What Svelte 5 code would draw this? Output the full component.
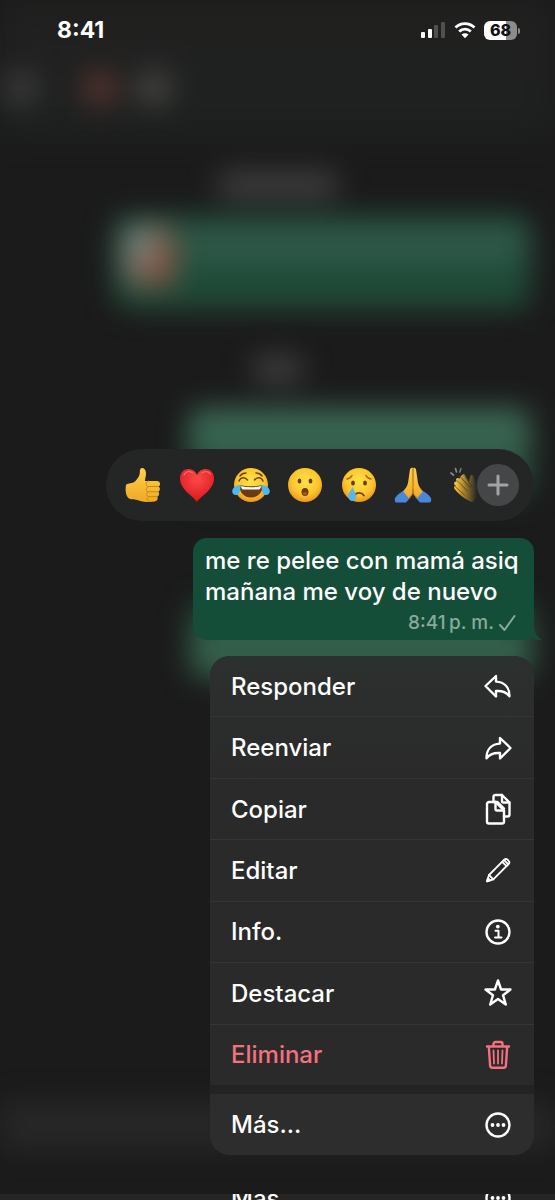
<script>
  let selected = $state('');

  const reactions = [
    { id: 'thumb', label: 'Pulgar arriba' },
    { id: 'heart', label: 'Corazón' },
    { id: 'joy', label: 'Risa' },
    { id: 'wow', label: 'Asombro' },
    { id: 'sad', label: 'Tristeza' },
    { id: 'pray', label: 'Gracias' },
    { id: 'clap', label: 'Aplausos' },
  ];

  const actions = [
    { id: 'reply', label: 'Responder' },
    { id: 'forward', label: 'Reenviar' },
    { id: 'copy', label: 'Copiar' },
    { id: 'edit', label: 'Editar' },
    { id: 'info', label: 'Info.' },
    { id: 'star', label: 'Destacar' },
    { id: 'trash', label: 'Eliminar', danger: true },
  ];
</script>

{#snippet icon(id)}
  <svg class="icon" viewBox="0 0 30 30" aria-hidden="true">
    {#if id === 'reply'}
      <path d="M13 5 2.500 15 13 25.500v-5.500c5.500-.4 10.300.8 13.500 5.200C26.500 16.500 21.500 11 13 10.600Z" />
    {:else if id === 'forward'}
      <path d="M17 5 27.500 15 17 25.500v-5.500c-5.500-.4-10.300.8-13.500 5.200C3.500 16.500 8.500 11 17 10.600Z" />
    {:else if id === 'copy'}
      <path d="M12.500 8H6a2 2 0 0 0-2 2v17.500a2 2 0 0 0 2 2h13a2 2 0 0 0 2-2V16.500Z" />
      <path d="M12.500 8v7a1.500 1.500 0 0 0 1.500 1.500h7" />
      <path d="M10.500 8V3a2 2 0 0 1 2-2H19l7.500 7.500v12a2 2 0 0 1-2 2H21" />
      <path d="M19 1v6a1.500 1.500 0 0 0 1.500 1.500h6M12.500 8h2l6.500 6.500" />
    {:else if id === 'edit'}
      <g stroke-width="1.800">
        <path d="M4 26.300 6 20 21.300 4.700a2.300 2.300 0 0 1 3.200 0l1.100 1.100a2.300 2.300 0 0 1 0 3.200L10.300 24.300Z" />
        <path d="m19.200 6.800 4.300 4.300M21 5l4.300 4.300M6 20l4.300 4.300" />
        <path d="m4 26.300 1-3.200 2.200 2.200Z" fill="currentColor" />
      </g>
    {:else if id === 'info'}
      <circle cx="15" cy="15" r="11.500" />
      <circle cx="14.800" cy="9.600" r="1.900" fill="currentColor" stroke="none" />
      <path d="M12.500 13.800h3V20M12 20.500h6.500" stroke-width="2" />
    {:else if id === 'star'}
      <path d="m15 2.500 3.100 9h9.400L20 17.200l2.800 9.300L15 21l-7.800 5.500L10 17.200 2.500 11.500h9.400Z" />
    {:else if id === 'trash'}
      <path d="M4 6.500h22M10.500 6.500V4a2 2 0 0 1 2-2h5a2 2 0 0 1 2 2v2.500M5.800 6.500l1.300 19a2.300 2.300 0 0 0 2.300 2.200h11.200a2.300 2.300 0 0 0 2.300-2.200l1.300-19" />
      <path d="m10.500 10.500.5 13M15 10.500v13M19.500 10.500l-.5 13" stroke-width="1.800" />
    {:else}
      <circle cx="15" cy="15" r="11.500" />
      <g fill="currentColor" stroke="none">
        <circle cx="9.500" cy="15" r="1.900" />
        <circle cx="15" cy="15" r="1.900" />
        <circle cx="20.500" cy="15" r="1.900" />
      </g>
    {/if}
  </svg>
{/snippet}

{#snippet emoji(id)}
  <svg class="emoji" viewBox="0 0 36 36" aria-hidden="true">
    {#if id === 'thumb'}
      <path d="M1 18c1-1.800 5-1.600 7.500-2.600 3-1.800 6-5.800 6.300-9.400.1-2.500.1-5 2.200-5.100 2.600 0 4 2.600 4 5.600 0 2.800-1 5-1 7.500h12c3.500 0 4 4.800 1.500 5.500 2 1.200 1.800 4.500-.3 5.200 1.600 1.400 1 4.300-1 4.900 1.200 1.800.2 4.400-2.200 4.900-5 .8-11.500.6-15.500-.8-3-1-4.500-1.500-8-1.500-6 .2-6.500-10-5.500-14.200Z" fill="url(#skin)" />
      <path d="M33.500 19.500h-10c-3 0-3.500-4 0-5.500M33 24.700h-9.500c-3 0-3.200-4.500 0-5.200M32 29.600h-8c-3 0-3-4.300-.5-4.900M24 34c-3-.4-2.500-4 0-4.400" fill="none" stroke="#c98a14" stroke-width="1" stroke-linecap="round" />
    {:else if id === 'heart'}
      <path d="M18 35C14 29 1 22.500 1 11.500 1 6 4.500 2 9.300 2c3.900 0 7.200 2.300 8.700 6 1.500-3.700 4.800-6 8.700-6C31.500 2 35 6 35 11.500 35 22.500 22 29 18 35Z" fill="url(#red)" />
      <path d="M5 8c1.500-3.500 5.500-4.500 8.500-2M23 6c3-2 6.500-1.500 8.300 1" fill="none" stroke="#ff9a94" stroke-width="1.500" stroke-linecap="round" opacity=".5" />
    {:else if id === 'pray'}
      <path d="M0 31c3-4 6-6 10-8l6 7-5 5.500H1c-1 0-1.500-2.500-1-4.500ZM36 31c-3-4-6-6-10-8l-6 7 5 5.500h10c1 0 1.500-2.500 1-4.500Z" fill="#4b87d9" />
      <path d="M17.800 1c-1.600-.8-2.700.3-3 2.500L13 16c-.8 4-3 5.500-4.800 8.500l5.500 6.500c3.300-1.500 4.300-4.500 4.300-8.500ZM18.200 1c1.600-.8 2.700.3 3 2.500L23 16c.8 4 3 5.500 4.800 8.500L22.300 31c-3.300-1.500-4.300-4.500-4.300-8.500Z" fill="url(#skin)" />
      <path d="M18 2v20c0 4-1 7-4 8.500M18 22c0 4 1 7 4 8.500" fill="none" stroke="#b97812" stroke-width="1" />
    {:else if id === 'clap'}
      <path d="m2 6 2.500 2M6.500 1.500l1 3.500M12 1.500l-1.200 3.500" stroke="#85898d" stroke-width="1.700" stroke-linecap="round" />
      <path d="M12 9c2-2.500 3.500-2 4.200-.5L20 15l1-5c.5-2.500 3-2.500 3.500-.5 3 7 6 14 3.500 20-1 3-3 4.500-5 5.500-6-2-12-6.500-17-12.500-2-2-.5-4 1-3.500-3-2-2-5 .5-4.500-1.500-3 1-4.500 3-3Z" fill="url(#skin)" />
      <path d="m8 13.500 10 10M5.500 19l10 9M11 9.500l10 11M16 9l7 11" fill="none" stroke="#9a610e" stroke-width="1" stroke-linecap="round" />
    {:else}
      <circle cx="18" cy="18" r="17" fill="url(#face)" />
      {#if id === 'joy'}
        <path d="M6 14c1.500-4 6-4.500 8.500-1M21.500 13c2.500-3.500 7-3 8.500 1M7 9c1.500-2 3.500-3 6-3M23 6c2.500 0 4.500 1 6 3" fill="none" stroke="#714212" stroke-width="1.500" stroke-linecap="round" />
        <path d="M6.500 18c7 1.800 16 1.800 23 0 .5 7-4.500 12.500-11.500 12.500S6 25 6.500 18Z" fill="#6a3b12" />
        <path d="M8 19c6.500 1.600 13.500 1.600 20 0-.3 2-1 3.500-2 3.500H10c-1 0-1.700-1.500-2-3.500Z" fill="#fff" />
        <path d="M8 18C3.500 18-.3 20.500-.8 24c-.3 4 4.500 5.500 6.800 2.200 1.500-2.500 1-4.700 2-8.200ZM28 18c4.500 0 8.300 2.500 8.800 6 .3 4-4.500 5.500-6.800 2.200-1.500-2.500-1-4.700-2-8.200Z" fill="#4eb9ee" />
      {:else if id === 'wow'}
        <ellipse cx="12.500" cy="14" rx="1.900" ry="2.600" fill="#6d3d12" />
        <ellipse cx="23.500" cy="14" rx="1.900" ry="2.600" fill="#6d3d12" />
        <ellipse cx="18" cy="25" rx="3.500" ry="3.900" fill="#6d3d12" />
        <path d="M15.500 26.500c1-2 4-2 5 0-1 2.500-4 2.500-5 0Z" fill="#9b5925" />
      {:else}
        <path d="M6 12c2-.3 4-1.500 5-3.500M30 12c-2-.3-4-1.500-5-3.500" fill="none" stroke="#a66c15" stroke-width="1.500" stroke-linecap="round" />
        <ellipse cx="12" cy="16" rx="1.900" ry="2.600" fill="#6d3d12" />
        <ellipse cx="24" cy="16" rx="1.900" ry="2.600" fill="#6d3d12" />
        <path d="M13.500 28.500c2-3.500 7-3.500 9.500 0" fill="none" stroke="#754312" stroke-width="1.800" stroke-linecap="round" />
        <path d="M11.500 19.500c-1 4-4.500 6.500-4.300 10 .2 2.700 2 4.500 4 4.500 2.600 0 4.300-2 4-4.700-.4-3.300-2.700-5.800-3.700-9.800Z" fill="#55b7ec" />
      {/if}
    {/if}
  </svg>
{/snippet}

<!-- shared emoji gradients -->
<svg class="defs" width="0" height="0" aria-hidden="true">
  <defs>
    <radialGradient id="face" cx=".5" cy=".4" r=".6">
      <stop offset="0" stop-color="#ffe24a" />
      <stop offset=".65" stop-color="#fdc62e" />
      <stop offset="1" stop-color="#ee9420" />
    </radialGradient>
    <linearGradient id="skin" x1="0" y1="0" x2="0" y2="1">
      <stop offset="0" stop-color="#ffd04a" />
      <stop offset="1" stop-color="#f0a925" />
    </linearGradient>
    <radialGradient id="red" cx=".5" cy=".3" r=".7">
      <stop offset="0" stop-color="#ff4a45" />
      <stop offset="1" stop-color="#da1620" />
    </radialGradient>
  </defs>
</svg>

<main class="screen">
  <!-- the conversation, out of focus -->
  <div class="chat" aria-hidden="true">
    <div class="chat-header">
      <span class="blob back"></span>
      <span class="blob avatar"></span>
      <span class="blob name"></span>
    </div>
    <span class="day"></span>
    <div class="sent">
      <span class="thumbnail"></span>
      <span class="lines"></span>
    </div>
    <span class="day short"></span>
    <div class="sent narrow"></div>
    <div class="sent last"></div>
    <div class="composer"></div>
  </div>

  <header class="status">
    <time>8:41</time>
    <div class="status-icons">
      <svg class="signal" viewBox="0 0 26 18" aria-hidden="true">
        <rect x="1" y="11" width="4" height="6" rx="1" fill="#fff" />
        <rect x="8" y="8" width="4" height="9" rx="1" fill="#fff" />
        <rect x="14" y="4" width="4" height="13" rx="1" fill="#50504f" />
        <rect x="21" y="1" width="4" height="16" rx="1" fill="#50504f" />
      </svg>
      <svg class="wifi" viewBox="0 0 22 18" aria-hidden="true">
        <path d="M1.500 6.500C6.800 1.200 15.200 1.200 20.500 6.500M5.200 10.500c3.200-3.200 8.400-3.200 11.600 0" fill="none" stroke="#fff" stroke-width="2.800" />
        <path d="m7.500 13.500 3.500 3.700 3.500-3.700c-2-1.800-5-1.800-7 0Z" fill="#fff" />
      </svg>
      <span class="battery">68</span>
    </div>
  </header>

  <div class="focus">
    <div class="reactions">
      <div class="emoji-list">
        {#each reactions as r}
          <button class="emoji-button" aria-label={r.label} onclick={() => (selected = r.id)}>
            {@render emoji(r.id)}
          </button>
        {/each}
      </div>
      <button class="plus" aria-label="Más reacciones">
        <svg viewBox="0 0 42 42" aria-hidden="true">
          <path d="M21 12v18M12 21h18" stroke="#a3a3a5" stroke-width="3" stroke-linecap="round" />
        </svg>
      </button>
    </div>

    <article class="message">
      <p>me re pelee con mamá asiq<br />mañana me voy de nuevo</p>
      <footer>
        <span>8:41&#8239;p. m.</span>
        <svg class="check" viewBox="0 0 18 18" aria-hidden="true">
          <path d="m2 11 4.500 5L16.500 2" />
        </svg>
      </footer>
      <svg class="tail" viewBox="0 0 16 16" aria-hidden="true">
        <path d="M0 16V0h8c0 8 1 12 8 16-5 .3-9-1-12-3Z" fill="#144d38" />
      </svg>
    </article>

    <div class="menu">
      <div class="group">
        {#each actions as a}
          <button class="row" class:danger={a.danger} onclick={() => (selected = a.id)}>
            <span>{a.label}</span>
            {@render icon(a.id)}
          </button>
        {/each}
      </div>
      <button class="row more" onclick={() => (selected = 'more')}>
        <span>Más...</span>
        {@render icon('more')}
      </button>
    </div>
  </div>

  <div class="peek" aria-hidden="true">
    <div class="row">
      <span>Más...</span>
      {@render icon('more')}
    </div>
  </div>
</main>

<style>
  :global(body) {
    margin: 0;
    background: #1b1b1b;
  }

  .defs {
    position: absolute;
  }

  .screen {
    position: relative;
    display: flex;
    flex-direction: column;
    height: 100vh;
    overflow: hidden;
    background: #1b1b1b;
    color: #fff;
    font-family: Inter, 'Liberation Sans', sans-serif;
  }

  button {
    margin: 0;
    padding: 0;
    border: none;
    background: none;
    color: inherit;
    font: inherit;
    cursor: pointer;
  }

  /* Blurred conversation behind the menu */
  .chat {
    position: absolute;
    inset: 0;
    display: flex;
    flex-direction: column;
    filter: blur(14px);
  }

  .chat-header {
    display: flex;
    align-items: center;
    height: 56px;
    padding-top: 60px;
    padding-bottom: 20px;
    background: linear-gradient(#20201f, #1e2120);
  }

  .blob {
    width: 36px;
    height: 36px;
    border-radius: 18px;
    background: #3b3b3b;
  }

  .avatar {
    margin-left: 44px;
    background: #56332f;
  }

  .name {
    margin-left: 18px;
    background: #464643;
  }

  .back {
    margin-left: 2px;
  }

  .day {
    align-self: center;
    flex-shrink: 0;
    width: 122px;
    height: 26px;
    margin-top: 36px;
    border-radius: 12px;
    background: #404040;
  }

  .short {
    width: 52px;
    margin-top: 48px;
  }

  .sent {
    display: flex;
    flex-shrink: 0;
    gap: 16px;
    height: 72px;
    margin: 18px 24px 0 114px;
    padding: 10px;
    border-radius: 14px;
    background: linear-gradient(#21503d, #2b5746 40%, #1b4634 75%, #28533f);
  }

  .thumbnail {
    width: 52px;
    height: 60px;
    border-radius: 10px;
    background: linear-gradient(120deg, #798079 35%, #815544 60%);
  }

  .lines {
    flex: 1;
    height: 30px;
    background: #305848;
  }

  .narrow {
    height: 70px;
    margin: 26px 24px 0 188px;
    background: linear-gradient(#3f6b59, #335e4b 50%, #1e4635);
  }

  .last {
    height: 56px;
    margin: 104px 22px 0 190px;
    background: linear-gradient(#1e4b38, #35604c 50%);
  }

  .composer {
    height: 48px;
    margin-top: auto;
    margin-bottom: 50px;
    background: #272727;
  }

  .status {
    position: relative;
    display: flex;
    align-items: center;
    justify-content: space-between;
    height: 32px;
    padding: 16px 38px 0 57px;
  }

  .status time {
    font-size: 23px;
    font-weight: 700;
  }

  .status-icons {
    display: flex;
    align-items: center;
    gap: 8px;
  }

  .signal {
    width: 26px;
    height: 18px;
  }

  .wifi {
    width: 22px;
    height: 18px;
  }

  .battery {
    position: relative;
    width: 33px;
    border-radius: 6px;
    background: linear-gradient(90deg, #fff 68%, #8c8c8b 68%);
    color: #111;
    font-size: 16px;
    font-weight: 800;
    line-height: 19px;
    text-align: center;
  }

  .battery::after {
    content: '';
    position: absolute;
    top: 7px;
    right: -3px;
    width: 2px;
    height: 6px;
    border-radius: 0 2px 2px 0;
    background: #8c8c8b;
  }

  .focus {
    position: relative;
    display: flex;
    flex-direction: column;
    align-items: flex-end;
    padding: 405px 21px 0;
  }

  .reactions {
    display: flex;
    align-items: center;
    box-sizing: border-box;
    width: 428px;
    max-width: 100%;
    height: 72px;
    padding: 0 15px 0 19px;
    border-radius: 36px;
    background: #242625;
  }

  .emoji-list {
    display: flex;
    flex: 1;
    gap: 18px;
    min-width: 0;
    overflow: hidden;
    mask-image: linear-gradient(90deg, #000 94%, transparent);
  }

  .emoji-button {
    flex-shrink: 0;
    height: 36px;
  }

  .emoji {
    display: block;
    width: 36px;
    height: 36px;
    overflow: visible;
  }

  .plus {
    flex-shrink: 0;
    width: 42px;
    height: 42px;
    border-radius: 50%;
    background: #454648;
  }

  .plus svg {
    display: block;
  }

  .message {
    position: relative;
    box-sizing: border-box;
    width: 341px;
    height: 102px;
    margin-top: 17px;
    padding: 7px 18px 0 12px;
    border-radius: 14px;
    background: #144d38;
  }

  .message p {
    margin: 0;
    font-size: 24px;
    font-weight: 500;
    line-height: 31px;
    white-space: nowrap;
  }

  .message footer {
    display: flex;
    align-items: center;
    justify-content: flex-end;
    gap: 4px;
    color: #87aa9b;
    font-size: 19px;
    font-weight: 500;
    line-height: 32px;
  }

  .check {
    width: 18px;
    height: 18px;
    fill: none;
    stroke: currentColor;
    stroke-width: 2;
    stroke-linecap: round;
    stroke-linejoin: round;
  }

  .tail {
    position: absolute;
    right: -8px;
    bottom: 0;
    width: 16px;
    height: 16px;
  }

  .menu {
    width: 324px;
    margin-top: 16px;
    overflow: hidden;
    border-radius: 20px;
    background: #232323;
  }

  .group {
    display: flex;
    flex-direction: column;
    height: 429px;
    background: linear-gradient(#2c302e, #2a2a2a 30%);
  }

  .row {
    display: flex;
    flex: 1;
    align-items: center;
    justify-content: space-between;
    box-sizing: border-box;
    width: 100%;
    padding: 0 21px;
    font-size: 24px;
    font-weight: 500;
    text-align: left;
  }

  .row + .row {
    border-top: 1px solid #343535;
  }

  .danger {
    color: #f4717f;
  }

  .more {
    height: 61px;
    margin-top: 9px;
    background: #2d2d2d;
  }

  .icon {
    flex-shrink: 0;
    width: 30px;
    height: 30px;
    overflow: visible;
    fill: none;
    stroke: currentColor;
    stroke-width: 2.4;
    stroke-linecap: round;
    stroke-linejoin: round;
  }

  /* Top edge of the sheet that starts below the menu */
  .peek {
    position: relative;
    display: flex;
    flex-shrink: 0;
    align-items: center;
    justify-content: flex-end;
    height: 8px;
    margin-top: 39px;
    padding-right: 21px;
    overflow: hidden;
    background: #252525;
  }

  .peek .row {
    flex: none;
    width: 324px;
  }
</style>
